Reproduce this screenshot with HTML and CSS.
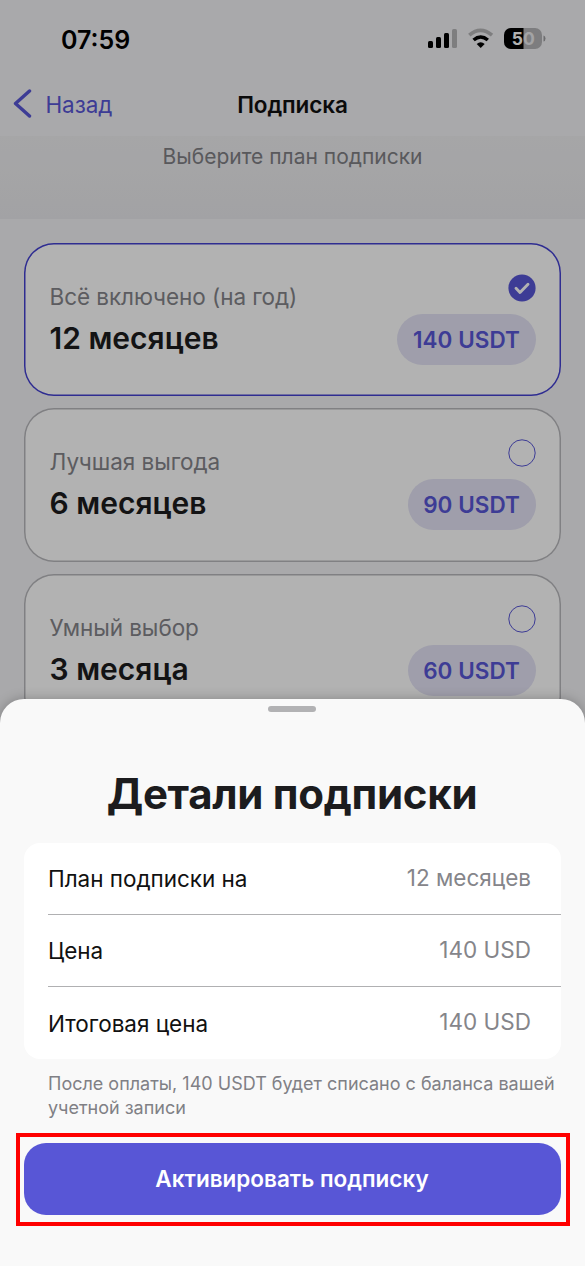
FILE: index.html
```html
<!DOCTYPE html>
<html lang="ru">
<head>
<meta charset="utf-8">
<title>Подписка</title>
<link rel="stylesheet" href="styles.css">
</head>
<body>
<div class="screen">
  <div class="page">
    <div class="status">
      <span class="time">07:59</span>
      <svg class="indicators" width="119" height="24" viewBox="0 0 119 24">
        <rect x="1" y="14" width="5" height="7" rx="1.5"/>
        <rect x="9" y="10" width="5" height="11" rx="1.5"/>
        <rect x="17" y="6" width="5" height="15" rx="1.5"/>
        <rect x="25" y="2" width="5" height="19" rx="1.5" opacity=".25"/>
        <g fill="none" stroke="#000" stroke-width="3.6">
          <path d="M42.3 8.2Q53.5-1.4 65 8.2" opacity=".25"/>
          <path d="M46.600 13Q53.700 7 60.800 13"/>
        </g>
        <path d="M49.700 17Q53.700 13.600 57.700 17L53.700 21Z"/>
        <rect x="77" y="1" width="38" height="21" rx="7" fill="#b4b4b6"/>
        <path d="M96.500 1H84a7 7 0 0 0-7 7v7a7 7 0 0 0 7 7h12.500Z"/>
        <path d="M116.500 8.500q2 .5 2 3t-2 3Z" opacity=".35"/>
        <text class="charge" x="84.700" y="17.500">5<tspan fill="#eaeaec">0</tspan></text>
      </svg>
    </div>
    <div class="nav">
      <div class="back">
        <svg width="20" height="30" viewBox="0 0 20 30"><path d="M17.500 2 3.500 14.500l14 12.500" fill="none" stroke="currentColor" stroke-width="3.400" stroke-linecap="round" stroke-linejoin="round"/></svg>
        <span class="back-label">Назад</span>
      </div>
      <span class="nav-title">Подписка</span>
    </div>
    <div class="intro"><span>Выберите план подписки</span></div>
    <div class="plans">
      <div class="plan selected">
        <div class="plan-text"><span class="plan-name">Всё включено (на год)</span><span class="plan-term">12 месяцев</span></div>
        <div class="plan-side">
          <svg class="radio" width="28" height="28" viewBox="0 0 28 28"><circle cx="14" cy="14" r="13.600" fill="#5856d6"/><path d="m8 14.300 4 4.200 8-8.300" fill="none" stroke="#fff" stroke-width="2.900" stroke-linecap="round" stroke-linejoin="round"/></svg>
          <span class="price">140 USDT</span>
        </div>
      </div>
      <div class="plan">
        <div class="plan-text"><span class="plan-name">Лучшая выгода</span><span class="plan-term">6 месяцев</span></div>
        <div class="plan-side">
          <svg class="radio" width="28" height="28" viewBox="0 0 28 28"><circle cx="14" cy="14" r="13.200" fill="none" stroke="#5856d6"/></svg>
          <span class="price">90 USDT</span>
        </div>
      </div>
      <div class="plan">
        <div class="plan-text"><span class="plan-name">Умный выбор</span><span class="plan-term">3 месяца</span></div>
        <div class="plan-side">
          <svg class="radio" width="28" height="28" viewBox="0 0 28 28"><circle cx="14" cy="14" r="13.200" fill="none" stroke="#5856d6"/></svg>
          <span class="price">60 USDT</span>
        </div>
      </div>
    </div>
  </div>
  <div class="dim"></div>
  <div class="sheet">
    <div class="grabber"></div>
    <h1 class="sheet-title">Детали подписки</h1>
    <div class="details">
      <div class="row"><span class="key">План подписки на</span><span class="value">12 месяцев</span></div>
      <div class="row"><span class="key">Цена</span><span class="value">140 USD</span></div>
      <div class="row"><span class="key">Итоговая цена</span><span class="value">140 USD</span></div>
    </div>
    <p class="note">После оплаты, 140 USDT будет списано с баланса вашей<br>учетной записи</p>
    <div class="highlight"><button class="activate">Активировать подписку</button></div>
  </div>
</div>
</body>
</html>
```
FILE: styles.css
```css
* { box-sizing: border-box; }
body { margin: 0; font-family: Inter, "Liberation Sans", sans-serif; }
.screen { position: relative; width: 585px; height: 1266px; overflow: hidden; background: #f2f2f5; }
.status { height: 80px; padding: 0 39px 2px 61px; display: flex; align-items: center; justify-content: space-between; }
.time { font-size: 25px; font-weight: 600; line-height: 30px; padding-top: 1px; }
.indicators { display: block; }
.charge { font-size: 17.500px; font-weight: 700; fill: #fff; }
.nav { height: 56px; display: grid; grid-template-columns: 1fr auto 1fr; align-items: center; padding: 0 0 9px 12px; }
.back { display: flex; align-items: center; gap: 13.500px; color: #5856d6; }
.back-label { font-size: 22.500px; line-height: 28px; letter-spacing: -.1px; padding-top: 2px; }
.nav-title { font-size: 22.500px; font-weight: 600; letter-spacing: -.1px; padding-top: 2px; margin-right: 12px; color: #111; }
.intro { height: 82.500px; background: linear-gradient(#eeeef0, #e9e9ec); color: #808085; font-size: 21px; line-height: 26px; text-align: center; padding-top: 8px; }
.plans { display: flex; flex-direction: column; gap: 12px; padding: 24px 24px 0; }
.plan { height: 153.500px; box-shadow: inset 0 0 0 1.500px #b8b8bc; border-radius: 30px; background: #fff; display: flex; justify-content: space-between; padding: 31px 25.500px 0; }
.plan.selected { box-shadow: inset 0 0 0 1.500px #4441d0; }
.plan-text { display: flex; flex-direction: column; padding-top: 9px; color: #1c1c1e; }
.plan-name { font-size: 22.500px; line-height: 28px; letter-spacing: -.06px; color: #85858a; }
.plan-term { font-size: 30px; font-weight: 600; line-height: 36px; margin-top: 9px; }
.plan-side { display: flex; flex-direction: column; align-items: flex-end; gap: 12px; }
.radio { display: block; }
.price { height: 51px; border-radius: 26px; padding: 0 15.500px; background: #e4e3f5; color: #5856d6; font-size: 22.500px; font-weight: 600; line-height: 51px; letter-spacing: .05px; }
.dim { position: absolute; inset: 0; background: rgba(0, 0, 0, .3); }
.sheet { position: absolute; left: 0; right: 0; bottom: 0; height: 567px; border-radius: 24px 24px 0 0; background: #f9f9f9; box-shadow: 0 0 12px rgba(0, 0, 0, .25); padding: 7px 24px 0; display: flex; flex-direction: column; }
.grabber { align-self: center; margin-right: 1px; width: 48px; height: 6px; border-radius: 3px; background: #b2b2b4; }
.sheet-title { margin: 57px 1px 0 0; text-align: center; font-size: 42px; line-height: 50px; font-weight: 700; letter-spacing: -.3px; color: #1c1c1e; }
.details { margin-top: 24px; height: 216px; border-radius: 16px; background: #fff; padding-left: 24px; }
.row { height: 72px; display: flex; align-items: center; justify-content: space-between; padding-right: 30px; font-size: 22.500px; border-bottom: 1px solid #b0b0b2; }
.row:last-child { border-bottom: 0; }
.key { color: #111; letter-spacing: -.03px; }
.value { color: #85858a; padding-bottom: 3px; }
.note { margin: 13px 0 0 24px; font-size: 18px; line-height: 24px; color: #808085; white-space: nowrap; }
.highlight { margin: 13px -9px 0 -8px; height: 93px; border: 4px solid #f00; padding: 6px 5px 7px 4px; }
.activate { display: block; width: 100%; height: 72px; border: 0; border-radius: 22px; background: #5856d6; color: #fff; font: 600 22.500px Inter, sans-serif; padding: 0 1px 1px 0; }
```
